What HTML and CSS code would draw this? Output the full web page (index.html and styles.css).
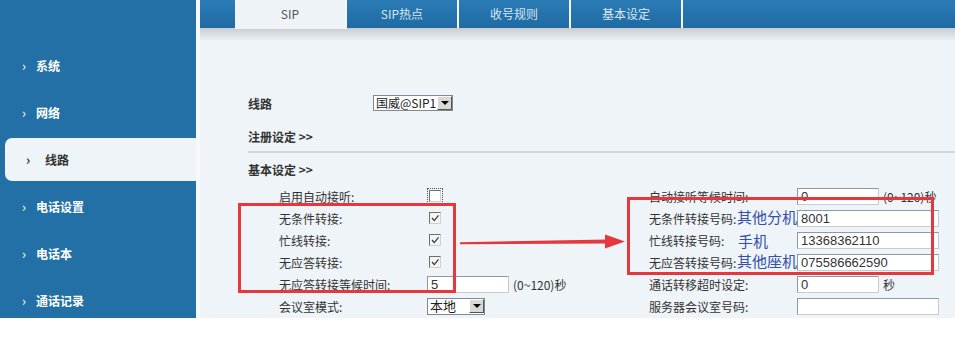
FILE: index.html
```html
<!DOCTYPE html>
<html>
    <head>
        <title>线路</title>
        <link rel="stylesheet" href="styles.css">
    </head>
    <body>
        <div class="page">
            <aside class="side">
                <div class="menu-item"><span class="chev">›</span>系统</div>
                <div class="menu-item"><span class="chev">›</span>网络</div>
                <div class="menu-item active"><span class="chev">›</span>线路</div>
                <div class="menu-item"><span class="chev">›</span>电话设置</div>
                <div class="menu-item"><span class="chev">›</span>电话本</div>
                <div class="menu-item"><span class="chev">›</span>通话记录</div>
            </aside>

            <div class="main">
                <div class="tabs">
                    <div class="tab active">SIP</div>
                    <div class="tab">SIP热点</div>
                    <div class="tab">收号规则</div>
                    <div class="tab">基本设定</div>
                </div>
                <div class="tab-shadow"></div>

                <div class="content">
                    <div class="line-row">
                        <span class="line-label">线路</span>
                        <span class="select line-select"><span class="val">国威@SIP1</span><span class="drop"></span></span>
                    </div>
                    <div class="section">注册设定 &gt;&gt;</div>
                    <div class="rule"></div>
                    <div class="section basic">基本设定 &gt;&gt;</div>

                    <div class="form">
                        <span class="lbl">启用自动接听:</span>
                        <span class="ctl"><span class="cb focus"></span></span>
                        <span class="lbl">自动接听等候时间:</span>
                        <span class="ctl"><span class="input short">0</span><span class="unit">(0~120)秒</span></span>

                        <span class="lbl">无条件转接:</span>
                        <span class="ctl"><span class="cb"><svg viewBox="0 0 10 10"><polyline points="2,5 4.3,7.6 8.5,2.4"/></svg></span></span>
                        <span class="lbl note-cell">无条件转接号码:<span class="note">其他分机</span></span>
                        <span class="ctl"><span class="input long">8001</span></span>

                        <span class="lbl">忙线转接:</span>
                        <span class="ctl"><span class="cb"><svg viewBox="0 0 10 10"><polyline points="2,5 4.3,7.6 8.5,2.4"/></svg></span></span>
                        <span class="lbl note-cell">忙线转接号码:<span class="note low">手机</span></span>
                        <span class="ctl"><span class="input long">13368362110</span></span>

                        <span class="lbl">无应答转接:</span>
                        <span class="ctl"><span class="cb"><svg viewBox="0 0 10 10"><polyline points="2,5 4.3,7.6 8.5,2.4"/></svg></span></span>
                        <span class="lbl note-cell">无应答转接号码:<span class="note">其他座机</span></span>
                        <span class="ctl"><span class="input long">075586662590</span></span>

                        <span class="lbl">无应答转接等候时间:</span>
                        <span class="ctl"><span class="input short">5</span><span class="unit">(0~120)秒</span></span>
                        <span class="lbl">通话转移超时设定:</span>
                        <span class="ctl"><span class="input short">0</span><span class="unit">秒</span></span>

                        <span class="lbl">会议室模式:</span>
                        <span class="ctl"><span class="select mode-select"><span class="val">本地</span><span class="drop"></span></span></span>
                        <span class="lbl">服务器会议室号码:</span>
                        <span class="ctl"><span class="input long"></span></span>
                    </div>
                </div>
            </div>

            <!-- annotations drawn on top of the screenshot -->
            <div class="mark mark-left"></div>
            <div class="mark mark-right"></div>
            <svg class="arrow" viewBox="0 0 170 20">
                <polygon points="2,10.2 150,7.6 150,11.6 2,12.2"/>
                <polygon points="147,2.5 167,9.5 147,16.5"/>
            </svg>
        </div>
    </body>
</html>
```

FILE: styles.css
```css
* {
    margin: 0;
    padding: 0;
    box-sizing: border-box;
}

body {
    background: #ffffff;
    font-family: "Noto Sans CJK SC", "Liberation Sans", sans-serif;
    font-size: 12px;
    color: #333;
}

.page {
    position: relative;
    display: flex;
    height: 318px;
    width: 955px;
}

/* left menu */
.side {
    width: 196px;
    background: #2270a6;
    padding-top: 42px;
}

.menu-item {
    display: flex;
    align-items: center;
    height: 47px;
    padding-left: 22px;
    color: #ffffff;
    font-weight: bold;
    font-size: 12px;
}

.chev {
    width: 14px;
    font-size: 13px;
    font-weight: normal;
}

.menu-item.active {
    height: 43px;
    margin: 2px 0 2px 5px;
    padding-left: 21px;
    background: #eef4f8;
    color: #333;
    border-radius: 7px 0 0 7px;
}

.menu-item.active .chev {
    width: 19px;
    font-weight: bold;
}

/* main panel */
.main {
    flex: 1;
    margin-left: 4px;
    background: #eef4f8;
    box-shadow: -4px 0 0 #f6f9fb;
}

.tabs {
    display: flex;
    height: 28px;
    padding-left: 35px;
    background: linear-gradient(#2b7cb6, #1f6aa2);
}

.tab {
    width: 112px;
    height: 28px;
    line-height: 28px;
    text-align: center;
    color: #d9e6f0;
    border-right: 2px solid #f2f6f9;
}

.tab.active {
    width: 112px;
    height: 29px;
    background: #eef3f7;
    color: #555;
    position: relative;
    z-index: 1;
}

.tab-shadow {
    height: 12px;
    background: linear-gradient(#c9cdd3, #e9eef2);
}

.content {
    padding-left: 48px;
}

.line-row {
    display: flex;
    align-items: center;
    height: 20px;
    margin-top: 53px;
}

.line-label {
    width: 125px;
    font-weight: bold;
}

.select {
    display: flex;
    align-items: center;
    justify-content: space-between;
    height: 16px;
    padding-left: 2px;
    background: #fff;
    border: 1px solid #7f8a94;
    font-size: 12px;
    color: #222;
}

.val {
    white-space: nowrap;
    line-height: 14px;
}

.line-select {
    width: 80px;
}

.mode-select {
    width: 58px;
    height: 17px;
    font-size: 13px;
}

.drop {
    flex-shrink: 0;
    width: 15px;
    height: 14px;
    background: #d8d8d4;
    border: 1px solid;
    border-color: #fff #555 #555 #fff;
    position: relative;
}

.drop::after {
    content: "";
    position: absolute;
    left: 3px;
    top: 4px;
    border-left: 4px solid transparent;
    border-right: 4px solid transparent;
    border-top: 4px solid #000;
}

.section {
    height: 20px;
    line-height: 20px;
    margin-top: 14px;
    font-weight: bold;
    font-size: 12px;
}

.rule {
    height: 2px;
    margin-top: 4px;
    background: #d2d8dc;
}

.section.basic {
    margin-top: 7px;
}

/* settings grid */
.form {
    display: grid;
    grid-template-columns: 148px 222px 148px 1fr;
    grid-auto-rows: 22px;
    align-items: center;
    margin-top: 5px;
    padding-left: 31px;
}

.lbl {
    white-space: nowrap;
    color: #333;
}

.ctl {
    display: flex;
    align-items: center;
}

.cb {
    display: block;
    width: 12px;
    height: 12px;
    margin-left: 2px;
    background: #f4f4f2;
    border: 1px solid;
    border-color: #6e6e6e #d0d0d0 #d0d0d0 #6e6e6e;
}

.cb svg {
    display: block;
    width: 10px;
    height: 10px;
}

.cb polyline {
    fill: none;
    stroke: #333;
    stroke-width: 1.2;
}

.cb.focus {
    outline: 1px dotted #555;
    outline-offset: 1px;
    background: #fff;
}

.input {
    display: block;
    height: 17px;
    line-height: 15px;
    padding-left: 3px;
    background: #fff;
    border: 1px solid;
    border-color: #8d99a4 #c4ccd2 #c4ccd2 #8d99a4;
    font-family: "Liberation Sans", sans-serif;
    font-size: 13px;
    color: #333;
}

.input.short {
    width: 82px;
}

.input.long {
    width: 142px;
}

.unit {
    margin-left: 4px;
    color: #333;
}

.note-cell {
    position: relative;
}

.note {
    position: absolute;
    left: 88px;
    top: -4px;
    font-size: 15px;
    color: #3450a8;
}

.note.low {
    left: 89px;
    top: -2px;
}

/* red annotation */
.mark {
    position: absolute;
    border: 3px solid #e5373c;
}

.mark-left {
    left: 238px;
    top: 203px;
    width: 218px;
    height: 90px;
}

.mark-right {
    left: 627px;
    top: 197px;
    width: 307px;
    height: 78px;
}

.arrow {
    position: absolute;
    left: 458px;
    top: 232px;
    width: 170px;
    height: 20px;
    fill: #e5373c;
}
```
